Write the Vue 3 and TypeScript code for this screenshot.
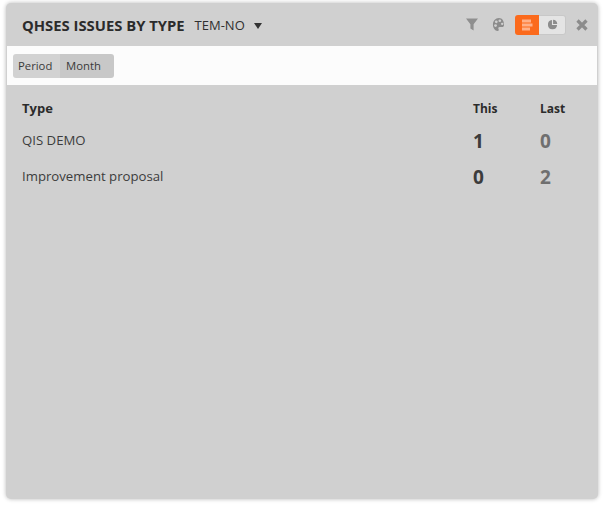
<script setup lang="ts">
interface IssueRow {
  type: string
  current: number
  last: number
}

const rows: IssueRow[] = [
  { type: 'QIS DEMO', current: 1, last: 0 },
  { type: 'Improvement proposal', current: 0, last: 2 },
]
</script>

<template>
  <div class="page">
    <section class="card">
      <header class="head">
        <h2 class="title">QHSES ISSUES BY TYPE</h2>
        <span class="unit">TEM-NO</span>
        <span class="caret"></span>
        <div class="tools">
          <svg class="ico filter" width="12" height="13" viewBox="0 0 12 13">
            <path d="M0 0.5h12L7.6 6.2V12.5L4.4 10.5V6.2z" fill="#8f8f8f" />
          </svg>
          <svg class="ico palette" width="13" height="15" viewBox="0 0 14 15">
            <path d="M7.5 0.5C3.5 0.5 1 3.8 1 7.5c0 3.8 2.2 7 5 7 1.5 0 1.6-1.2 1-2.2-.6-1.1.1-2 1.2-2h2.6c1.3 0 2.2-.9 2.2-2.2C13 3.5 11 .5 7.5.5z" fill="#8c8c8c" />
            <circle cx="4.6" cy="4.6" r="1.5" fill="#d0d0d0" />
            <circle cx="3.8" cy="8.6" r="1.5" fill="#d0d0d0" />
            <circle cx="8.4" cy="3.4" r="1.4" fill="#d0d0d0" />
            <circle cx="11" cy="6.8" r="1.3" fill="#d0d0d0" />
          </svg>
          <div class="switch">
            <button class="sw sw-on" type="button">
              <svg width="11" height="12" viewBox="0 0 11 12">
                <rect x="0" y="0.5" width="9" height="3" fill="#ffb088" />
                <rect x="0" y="4.5" width="10.5" height="3" fill="#ffb088" />
                <rect x="0" y="8.5" width="8" height="3" fill="#ffb088" />
              </svg>
            </button>
            <button class="sw sw-off" type="button">
              <svg width="11" height="11" viewBox="0 0 12 12">
                <path d="M5.4 1.2A5 5 0 1 0 11 6.6H5.4z" fill="#8c8c8c" />
                <path d="M6.6 0.8V5.4H11.2A4.8 4.8 0 0 0 6.6 0.8z" fill="#8c8c8c" />
              </svg>
            </button>
          </div>
          <svg class="ico close" width="12" height="12" viewBox="0 0 12 12">
            <path d="M1.5 1.5l9 9M10.5 1.5l-9 9" stroke="#8c8c8c" stroke-width="3.2" fill="none" />
          </svg>
        </div>
      </header>

      <div class="band">
        <div class="period">
          <span class="period-label">Period</span>
          <span class="period-value">Month</span>
        </div>
      </div>

      <div class="table">
        <div class="row row-head">
          <span class="c-type">Type</span>
          <span class="c-this">This</span>
          <span class="c-last">Last</span>
        </div>
        <div v-for="row in rows" :key="row.type" class="row row-data">
          <span class="c-type">{{ row.type }}</span>
          <span class="c-this num">{{ row.current }}</span>
          <span class="c-last num muted">{{ row.last }}</span>
        </div>
      </div>
    </section>
  </div>
</template>

<style>
html, body { margin: 0; background: #fff; }
</style>

<style scoped>
.page {
  width: 604px;
  height: 505px;
  padding: 3px 6px 6px 6px;
  box-sizing: border-box;
  font-family: "Open Sans", "Noto Sans", "Liberation Sans", sans-serif;
  color: #333;
}
.card {
  height: 100%;
  background: #d0d0d0;
  border-radius: 5px;
  box-shadow: 0 0 4px rgba(0, 0, 0, 0.28);
  overflow: hidden;
  display: flex;
  flex-direction: column;
}
.head {
  height: 43px;
  flex: none;
  display: flex;
  align-items: center;
  padding: 0 10px 0 16px;
}
.title {
  margin: 0;
  font-size: 14.8px;
  font-weight: 700;
  color: #2b2b2b;
}
.unit {
  margin-left: 10px;
  font-size: 13px;
  color: #2f2f2f;
}
.caret {
  margin-left: 9px;
  margin-top: 2px;
  width: 0;
  height: 0;
  border-left: 4px solid transparent;
  border-right: 4px solid transparent;
  border-top: 6px solid #333;
}
.tools {
  margin-left: auto;
  display: flex;
  align-items: center;
}
.ico { display: block; }
.palette { margin-left: 14px; }
.switch {
  margin-left: 10px;
  display: flex;
  height: 20px;
}
.sw {
  height: 20px;
  padding: 0;
  border: 0;
  display: flex;
  align-items: center;
  justify-content: center;
}
.sw-on {
  width: 24px;
  background: #fb6a1c;
  border-radius: 3px 0 0 3px;
}
.sw-off {
  width: 27px;
  background: #e4e4e4;
  border: 1px solid #c8c8c8;
  border-left: 0;
  border-radius: 0 3px 3px 0;
}
.close { margin-left: 10px; }
.band {
  height: 39px;
  flex: none;
  margin: 0 1px;
  background: #fcfcfc;
  display: flex;
  align-items: center;
  padding-left: 6px;
}
.period {
  display: flex;
  height: 24px;
  border-radius: 3px;
  overflow: hidden;
  font-size: 11.3px;
  line-height: 24px;
  color: #3a3a3a;
}
.period-label {
  width: 47px;
  padding-left: 5px;
  box-sizing: border-box;
  background: #d2d2d2;
}
.period-value {
  width: 54px;
  padding-left: 6px;
  box-sizing: border-box;
  background: #c8c8c8;
}
.table {
  padding: 13px 16px 0 16px;
}
.row {
  display: grid;
  grid-template-columns: 1fr 67px 42px;
  align-items: center;
}
.row-head {
  height: 20px;
  font-size: 12px;
  font-weight: 700;
  color: #2b2b2b;
}
.row-head .c-type { font-size: 13px; }
.row-data {
  height: 36px;
  font-size: 13.2px;
  color: #3c3c3c;
}
.row-data .c-type { padding-bottom: 2px; }
.row-head + .row-data { margin-top: 5px; }
.num {
  font-size: 19px;
  font-weight: 700;
}
.muted { color: #6f6f6f; }
</style>
